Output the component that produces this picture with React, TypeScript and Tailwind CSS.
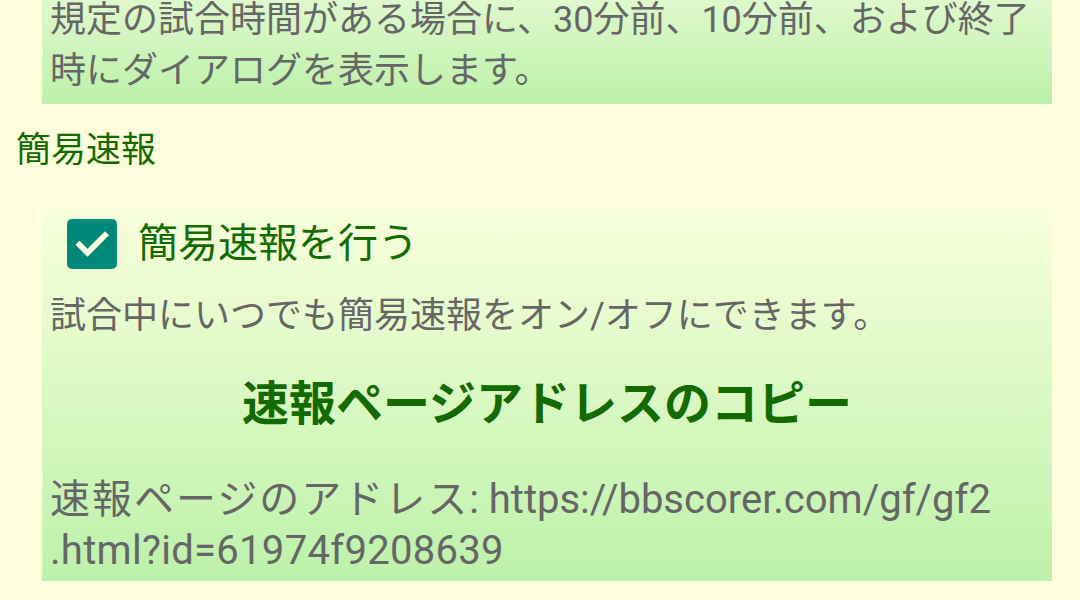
import React, { useState } from 'react';

const FONT = "font-['Roboto','Noto_Sans_CJK_JP',sans-serif]";

const App: React.FC = () => {
  const [quickReport, setQuickReport] = useState(true);

  return (
    <div className={`w-[1080px] h-[600px] overflow-hidden bg-[#ffffdd] ${FONT}`}>
      {/* match time section (scrolled partly off the top) */}
      <div className="ml-[42px] mr-[28px] -mt-[10px] pt-[5px] pb-[7px] px-[8px] bg-gradient-to-b from-[#e2f9cf] to-[#bbf1a9]">
        <p className="text-[36px] leading-[51px] text-[#666666]">
          規定の試合時間がある場合に、30分前、10分前、および終了時にダイアログを表示します。
        </p>
      </div>

      <h2 className="mt-[21px] pl-[16px] text-[35px] leading-[51px] text-[#136b00]">簡易速報</h2>

      <div className="ml-[42px] mr-[28px] mt-[30px] pt-[13px] pb-[5px] px-[8px] bg-gradient-to-b from-[#f8ffdc] to-[#bcf1aa]">
        <label className="flex items-center h-[50px] pl-[17px] cursor-pointer">
          <button
            onClick={() => setQuickReport(!quickReport)}
            className={`w-[50px] h-[50px] rounded-[5px] flex items-center justify-center ${
              quickReport ? 'bg-[#00897b]' : 'border-4 border-[#666666]'
            }`}
          >
            {quickReport && (
              <svg width="40" height="40" viewBox="0 0 24 24" fill="none">
                <path d="M4.5 12.5l4.8 4.8L19.8 6.8" stroke="#ffffdd" strokeWidth="3.4" strokeLinecap="square" />
              </svg>
            )}
          </button>
          <span className="ml-[21px] text-[40px] leading-[50px] text-[#136b00]">簡易速報を行う</span>
        </label>

        <p className="mt-[22px] text-[36px] leading-[51px] text-[#666666]">
          試合中にいつでも簡易速報をオン/オフにできます。
        </p>

        <button className="mt-[32px] w-full text-center text-[47px] leading-[60px] font-bold text-[#136b00]">
          速報ページアドレスのコピー
        </button>

        <p className="mt-[40px] text-[40px] leading-[51px] text-[#666666]">
          <span className="tracking-[2px]">速報ページのアドレス</span>
          <span className="tracking-[0px]">: https://bbscorer.com/gf/gf2</span>
          <br />
          <span className="tracking-[0.3px]">.html?id=61974f9208639</span>
        </p>
      </div>
    </div>
  );
};

export default App;
